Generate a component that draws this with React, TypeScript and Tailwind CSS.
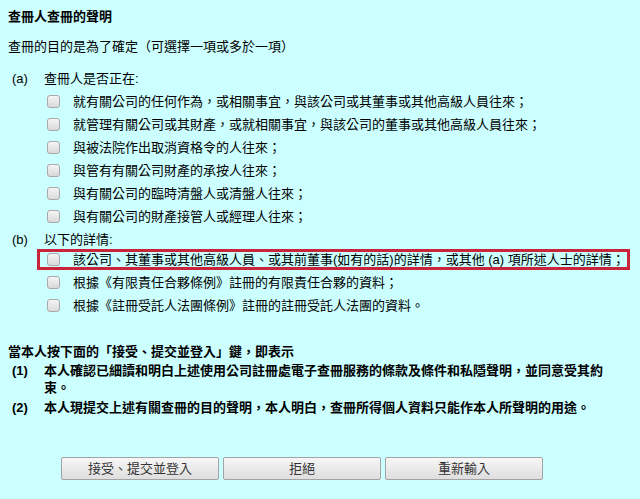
import { ReactNode } from 'react'

const partA = [
  '就有關公司的任何作為，或相關事宜，與該公司或其董事或其他高級人員往來；',
  '就管理有關公司或其財產，或就相關事宜，與該公司的董事或其他高級人員往來；',
  '與被法院作出取消資格令的人往來；',
  '與管有有關公司財產的承按人往來；',
  '與有關公司的臨時清盤人或清盤人往來；',
  '與有關公司的財產接管人或經理人往來；',
]

const partB = [
  '根據《有限責任合夥條例》註冊的有限責任合夥的資料；',
  '根據《註冊受託人法團條例》註冊的註冊受託人法團的資料。',
]

function Box() {
  return (
    <span className="inline-block w-[13px] h-[13px] shrink-0 rounded-[3px] border border-[#a9a9a9] bg-gradient-to-b from-[#f5f5f5] to-[#d9d9d9]" />
  )
}

function CheckRow({ children }: { children: ReactNode }) {
  return (
    <label className="flex items-center h-[23px] pl-[39px] gap-[13px]">
      <Box />
      <span>{children}</span>
    </label>
  )
}

function Label({ tag, children, bold }: { tag: string; children: ReactNode; bold?: boolean }) {
  return (
    <div className={`flex ${bold ? 'font-bold' : ''}`}>
      <span className="w-[36px] pl-[4px] shrink-0">{tag}</span>
      <span className="w-[566px]">{children}</span>
    </div>
  )
}

export default function App() {
  return (
    <div
      className="min-h-[499px] bg-[#ccffff] text-black text-[13px] leading-[16px] px-2 pt-[9px]"
      style={{ fontFamily: '"Liberation Sans", "Noto Sans CJK TC", sans-serif' }}
    >
      <p className="font-bold">查冊人查冊的聲明</p>
      <p className="mt-[14px]">查冊的目的是為了確定（可選擇一項或多於一項）</p>

      {/* (a) */}
      <div className="mt-[16px]">
        <Label tag="(a)">查冊人是否正在:</Label>
        <div className="mt-[3px]">
          {partA.map((t) => (
            <CheckRow key={t}>{t}</CheckRow>
          ))}
        </div>
      </div>

      {/* (b) */}
      <div className="mt-[4px]">
        <Label tag="(b)">以下的詳情:</Label>
        <div>
          <div className="ml-[29px] w-[593px] h-[21px] my-[1px] border-[3px] border-[#c9243a] flex items-center pl-[7px] gap-[13px]">
            <Box />
            <span className="whitespace-nowrap">該公司、其董事或其他高級人員、或其前董事(如有的話)的詳情，或其他 (a) 項所述人士的詳情；</span>
          </div>
          {partB.map((t) => (
            <CheckRow key={t}>{t}</CheckRow>
          ))}
        </div>
      </div>

      {/* declaration */}
      <div className="mt-[26px] font-bold leading-[17px]">
        <p>當本人按下面的「接受、提交並登入」鍵，即表示</p>
        <div className="mt-[2px]">
          <Label tag="(1)" bold>
            本人確認已細讀和明白上述使用公司註冊處電子查冊服務的條款及條件和私隱聲明，並同意受其約束。
          </Label>
        </div>
        <div className="mt-[3px]">
          <Label tag="(2)" bold>
            本人現提交上述有關查冊的目的聲明，本人明白，查冊所得個人資料只能作本人所聲明的用途。
          </Label>
        </div>
      </div>

      <div className="mt-[41px] pl-[53px] flex gap-[4px]">
        {['接受、提交並登入', '拒絕', '重新輸入'].map((b) => (
          <button
            key={b}
            className="w-[158px] h-[23px] rounded-[2px] border border-[#a3a3a3] bg-gradient-to-b from-[#f7f7f7] to-[#dedede] text-[13px] text-[#333]"
          >
            {b}
          </button>
        ))}
      </div>
    </div>
  )
}
